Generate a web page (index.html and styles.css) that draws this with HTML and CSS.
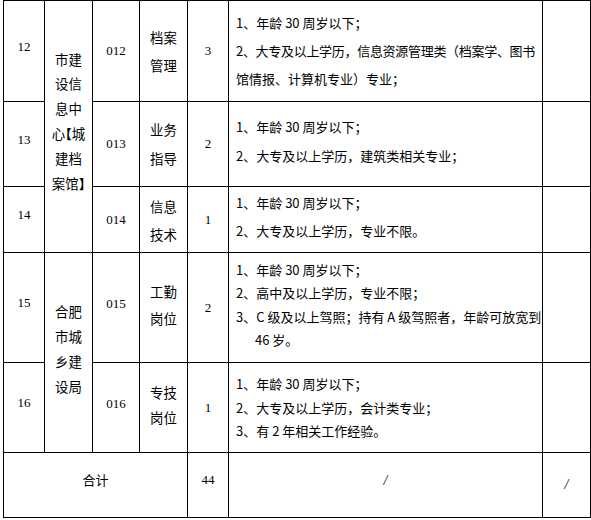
FILE: index.html
```html
<!DOCTYPE html>
<html lang="zh-CN">
<head>
<meta charset="utf-8">
<title>岗位表</title>
<link rel="stylesheet" href="styles.css">
</head>
<body>
<div class="sheet">
  <div class="cell num">12</div>
  <div class="cell org org-a"><div>市建<br>设信<br>息中<br>心<span class="br">【</span>城<br>建档<br>案馆<span class="br">】</span></div></div>
  <div class="cell code">012</div>
  <div class="cell pos lh28"><div>档案<br>管理</div></div>
  <div class="cell num cnt">3</div>
  <div class="cell req lh28">
    <div>1、年龄 30 周岁以下；</div>
    <div class="tight">2、大专及以上学历，信息资源管理类（档案学、图书</div>
    <div>馆情报、计算机专业）专业；</div>
  </div>
  <div class="cell"></div>

  <div class="cell num">13</div>
  <div class="cell code">013</div>
  <div class="cell pos lh29"><div>业务<br>指导</div></div>
  <div class="cell num cnt">2</div>
  <div class="cell req lh29 up">
    <div>1、年龄 30 周岁以下；</div>
    <div>2、大专及以上学历，建筑类相关专业；</div>
  </div>
  <div class="cell"></div>

  <div class="cell num">14</div>
  <div class="cell code">014</div>
  <div class="cell pos lh28"><div>信息<br>技术</div></div>
  <div class="cell num cnt">1</div>
  <div class="cell req lh28 up">
    <div>1、年龄 30 周岁以下；</div>
    <div>2、大专及以上学历，专业不限。</div>
  </div>
  <div class="cell"></div>

  <div class="cell num">15</div>
  <div class="cell org org-b"><div>合肥<br>市城<br>乡建<br>设局</div></div>
  <div class="cell code up">015</div>
  <div class="cell pos lh27 up"><div>工勤<br>岗位</div></div>
  <div class="cell num cnt">2</div>
  <div class="cell req lh24 up">
    <div>1、年龄 30 周岁以下；</div>
    <div>2、高中及以上学历，专业不限；</div>
    <div>3、C 级及以上驾照；持有 A 级驾照者，年龄可放宽到</div>
    <div class="indent">46 岁。</div>
  </div>
  <div class="cell"></div>

  <div class="cell num">16</div>
  <div class="cell code up">016</div>
  <div class="cell pos lh25 up"><div>专技<br>岗位</div></div>
  <div class="cell num cnt">1</div>
  <div class="cell req lh24">
    <div>1、年龄 30 周岁以下；</div>
    <div>2、大专及以上学历，会计类专业；</div>
    <div>3、有 2 年相关工作经验。</div>
  </div>
  <div class="cell"></div>

  <div class="cell total">合计</div>
  <div class="cell num cnt total-n">44</div>
  <div class="cell slash">/</div>
  <div class="cell slash slash-r">/</div>
</div>
</body>
</html>
```

FILE: styles.css
```css
html, body {
  margin: 0;
  padding: 0;
  background: #ffffff;
}

body {
  font-family: "Noto Sans CJK SC", "Noto Sans", sans-serif;
  font-size: 13px;
  color: #000000;
}

.sheet {
  display: grid;
  grid-template-columns: 41px 48px 47px 48px 41px 314px 48px;
  grid-template-rows: 101px 85px 66px 110px 90px 65px;
  width: max-content;
  margin-left: 3px;
  border-left: 1px solid #000;
  border-top: 1px solid #000;
}

.cell {
  box-sizing: border-box;
  border-right: 1px solid #000;
  border-bottom: 1px solid #000;
  display: flex;
  flex-direction: column;
  align-items: center;
  justify-content: center;
  text-align: center;
  line-height: 1.2;
}

.num,
.code {
  font-family: "Liberation Serif", "DejaVu Serif", serif;
  font-size: 13px;
  padding-bottom: 9px;
}

.code {
  padding-bottom: 0;
}

.cnt {
  padding-bottom: 0;
}

.up {
  padding-bottom: 6px;
}

.code.up {
  padding-bottom: 8px;
}

.org {
  grid-row: span 3;
  font-size: 13.4px;
  line-height: 24.6px;
  padding-bottom: 10px;
  white-space: nowrap;
}

.org-b {
  grid-row: span 2;
  line-height: 25px;
  padding-bottom: 8px;
}

.br {
  font-feature-settings: "halt" 1;
  font-size: 13px;
  font-weight: 700;
}

.pos {
  font-size: 13.4px;
}

.lh24 { line-height: 23.5px; }
.lh25 { line-height: 25px; }
.lh27 { line-height: 27px; }
.lh28 { line-height: 28px; }
.lh29 { line-height: 29px; }

.req {
  align-items: flex-start;
  text-align: left;
  padding-left: 7px;
  white-space: nowrap;
  font-size: 13px;
}

.tight {
  letter-spacing: -0.3px;
}

.indent {
  padding-left: 19px;
}

.total {
  grid-column: span 4;
  padding-bottom: 10px;
}

.total-n {
  padding-bottom: 10px;
}

.slash {
  font-family: "Liberation Serif", serif;
  font-style: italic;
  font-size: 14px;
  padding-bottom: 8px;
}

.slash-r {
  padding-bottom: 0;
}
```
